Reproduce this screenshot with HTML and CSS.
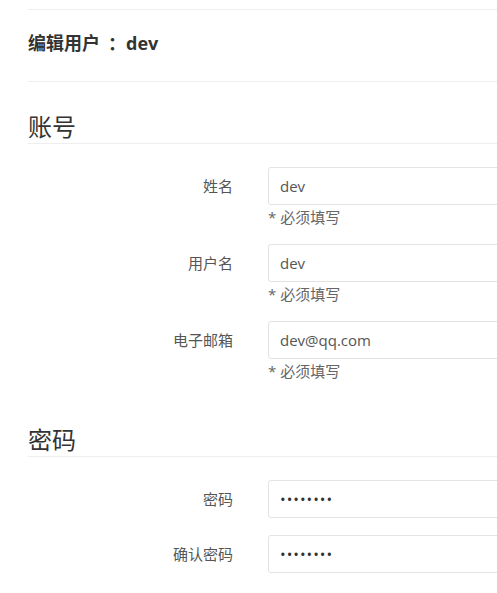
FILE: index.html
```html
<!DOCTYPE html>
<html>
    <head>
        <meta charset="UTF-8">
        <meta name="viewport" content="width=device-width, initial-scale=1.0">
        <title>编辑用户</title>
        <link rel="stylesheet" href="styles.css">
    </head>
    <body>
        <div class="page-wrapper">
            <div class="page-header">
                <h2 class="page-title">编辑用户<span class="title-colon">：</span>dev</h2>
            </div>
            <form class="user-form">
                <h3 class="section-title">账号</h3>
                <div class="form-fields">
                    <div class="form-row">
                        <label class="form-label" for="name">姓名</label>
                        <div class="form-control-wrap">
                            <input class="form-input" id="name" type="text" value="dev">
                            <p class="help-text">* 必须填写</p>
                        </div>
                    </div>
                    <div class="form-row">
                        <label class="form-label" for="username">用户名</label>
                        <div class="form-control-wrap">
                            <input class="form-input" id="username" type="text" value="dev">
                            <p class="help-text">* 必须填写</p>
                        </div>
                    </div>
                    <div class="form-row">
                        <label class="form-label" for="email">电子邮箱</label>
                        <div class="form-control-wrap">
                            <input class="form-input" id="email" type="text" value="dev@qq.com">
                            <p class="help-text">* 必须填写</p>
                        </div>
                    </div>
                </div>

                <h3 class="section-title section-password">密码</h3>
                <div class="form-fields">
                    <div class="form-row form-row-tight">
                        <label class="form-label" for="password">密码</label>
                        <div class="form-control-wrap">
                            <input class="form-input" id="password" type="password" value="12345678">
                        </div>
                    </div>
                    <div class="form-row form-row-tight">
                        <label class="form-label" for="password2">确认密码</label>
                        <div class="form-control-wrap">
                            <input class="form-input" id="password2" type="password" value="12345678">
                        </div>
                    </div>
                </div>
            </form>
        </div>
    </body>
</html>
```

FILE: styles.css
```css
* {
    margin: 0;
    padding: 0;
    box-sizing: border-box;
}
body {
    font-family: "Open Sans", "Noto Sans CJK SC", sans-serif;
    font-size: 15px;
    color: #555;
    background-color: #fff;
    overflow: hidden;
}
.page-wrapper {
    margin-left: 28px;
    width: 600px;
}
.page-header {
    margin-top: 9px;
    border-top: 1px solid #eee;
    border-bottom: 1px solid #eee;
    padding-top: 20px;
    padding-bottom: 25px;
}
.page-title {
    font-size: 18px;
    line-height: 26px;
    font-weight: bold;
    color: #333;
}
.title-colon {
    margin-left: 8px;
}
.section-title {
    margin-top: 29px;
    font-size: 24px;
    line-height: 32px;
    font-weight: normal;
    color: #333;
    border-bottom: 1px solid #eee;
}
.section-password {
    margin-top: 44px;
}
.form-fields {
    margin-top: 23px;
}
.form-row {
    display: flex;
    align-items: flex-start;
    margin-bottom: 18px;
}
.form-row-tight {
    margin-bottom: 17px;
}
.form-label {
    width: 205px;
    margin-right: 35px;
    text-align: right;
    line-height: 38px;
    color: #555;
}
.form-control-wrap {
    width: 300px;
}
.form-input {
    display: block;
    width: 100%;
    height: 38px;
    padding: 0 11px;
    border: 1px solid #e3e3e3;
    border-radius: 3px;
    font-family: "Open Sans", "Noto Sans CJK SC", sans-serif;
    font-size: 15px;
    color: #555;
    background-color: #fff;
    outline: none;
}
.form-input[type="password"] {
    color: #333;
    letter-spacing: 1px;
}
.help-text {
    margin-top: 3px;
    line-height: 18px;
    color: #666;
}
```
